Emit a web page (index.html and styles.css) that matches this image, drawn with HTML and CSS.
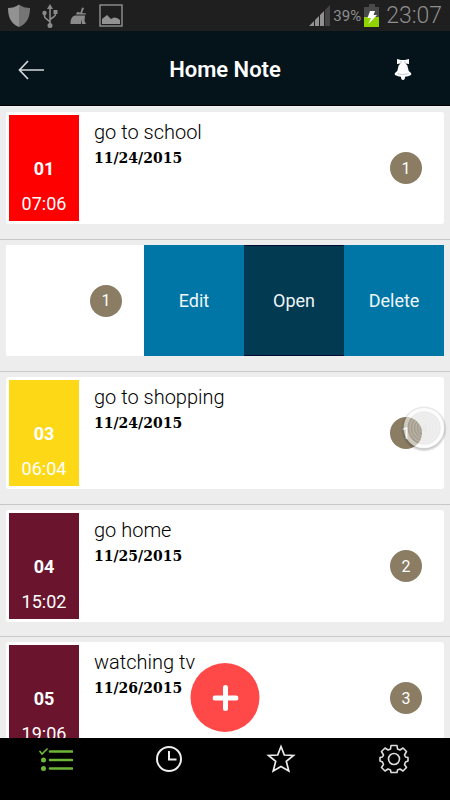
FILE: index.html
```html
<!DOCTYPE html>
<html lang="en">
<head>
<meta charset="utf-8">
<meta name="viewport" content="width=device-width, initial-scale=1">
<title>Home Note</title>
<link rel="stylesheet" href="styles.css">
</head>
<body>
<div class="app">
  <div class="status">
    <div class="status-group">
      <svg width="22" height="24" viewBox="0 0 22 24"><path d="M11 .5C8 3 4 4 0 4c0 9 3 16 11 19z" fill="#929292"/><path d="M11 .5C14 3 18 4 22 4c0 9-3 16-11 19z" fill="#757575"/></svg>
      <svg width="16" height="24" viewBox="0 0 16 24"><g fill="none" stroke="#8a8a8a" stroke-width="1.6"><path d="M8 3v18M2.500 9v3q0 2 2 3l3.500 3M13.500 8v2q0 2-2 3L8 15.500"/></g><g fill="#8a8a8a"><path d="M8 0l3 5H5z"/><circle cx="8" cy="21.500" r="2.500"/><circle cx="2.500" cy="9" r="2.200"/><path d="M11.500 6h4v4h-4z"/></g></svg>
      <svg width="17" height="18" viewBox="0 0 17 18"><path d="M12 .5L14 1l-2 5 4 .5v1H6l1-2.500 3.500.5zM5 8.500h10L14.500 14l1.500 3H12l-.5-5-.5 5H.5Q0 10 5 8.500z" fill="#8a8a8a"/></svg>
      <svg width="24" height="24" viewBox="0 0 24 24"><path d="M1 1h22v21H1z" fill="none" stroke="#8a8a8a" stroke-width="1.500"/><path d="M3 20v-5l5-4 4 4 3-1.500L18 14l3 2v4z" fill="#929292"/></svg>
    </div>
    <div class="status-group status-right">
      <svg width="21" height="21" viewBox="0 0 21 21"><path d="M16 5l5-5v21h-5z" fill="#444"/><path d="M0 21l5-5v5zM6 15l4-4v10H6zM11 10l4-4v15h-4z" fill="#929292"/></svg>
      <span class="percent">39%</span>
      <svg width="15" height="23" viewBox="0 0 15 23"><path d="M5 0h6v3h4v10H0V3h5z" fill="#4a4a4a"/><path d="M0 13h15v10H0z" fill="#91d300"/><path d="M6 7h5l-1.500 4H13l-8.500 9L7 14H3.500z" fill="#fff"/></svg>
      <time class="clock">23:07</time>
    </div>
  </div>

  <header class="header">
    <button class="icon-button" aria-label="Back"><svg width="26" height="20" viewBox="0 0 26 20"><path d="M26 10H1.500M10 1L1.500 10l8.500 9" fill="none" stroke="#d5d8da" stroke-width="1.700"/></svg></button>
    <h1 class="title">Home Note</h1>
    <button class="icon-button" aria-label="Reminders"><svg width="18" height="22" viewBox="0 0 18 22"><path d="M3 0l4 1h4l4-1v5l-3.500-.5Q14 6 14 9q0 3 2.500 4.500Q18 14.500 17 16q-3 1.500-6 1.800Q11 21 9 21t-2-3.200Q4 17.500 1 16q-1-1.500.5-2.500Q4 12 4 9q0-3 2.500-4.500L3 5z" fill="#fff"/><path d="M3.500 14.700q5.500 1.800 11 0M7 2v2.500M11 2v2.500" fill="none" stroke="#a9b3bb" stroke-width=".7"/></svg></button>
  </header>

  <main class="content">
    <ul class="notes">
      <li class="note">
        <article class="card">
          <div class="tag tag-red"><strong>01</strong><time>07:06</time></div>
          <div class="text"><h2>go to school</h2><p>11/24/2015</p></div>
          <span class="badge">1</span>
        </article>
      </li>
      <li class="note">
        <article class="card card-open">
          <span class="badge">1</span>
          <div class="actions">
            <button class="action">Edit</button>
            <button class="action action-pressed">Open</button>
            <button class="action">Delete</button>
          </div>
        </article>
      </li>
      <li class="note">
        <article class="card">
          <div class="tag tag-yellow"><strong>03</strong><time>06:04</time></div>
          <div class="text"><h2>go to shopping</h2><p>11/24/2015</p></div>
          <span class="badge">1</span>
          <svg class="touch" width="48" height="48" viewBox="0 0 48 48"><defs><radialGradient id="halo"><stop offset=".82" stop-color="#000" stop-opacity=".3"/><stop offset="1" stop-color="#000" stop-opacity="0"/></radialGradient><mask id="ring"><path d="M0 0h48v48H0z" fill="#fff"/><circle cx="24" cy="24" r="20" fill="#000"/></mask></defs><circle cx="24" cy="25" r="23" fill="url(#halo)" mask="url(#ring)"/><circle cx="24" cy="24" r="17" fill="#ccc" fill-opacity=".4"/><circle cx="24" cy="24" r="18.500" fill="none" stroke="#fafafa" stroke-opacity=".6" stroke-width="4"/><g fill="none" stroke="#fff" stroke-opacity=".2" stroke-width="1.500"><circle cx="24" cy="24" r="14"/><circle cx="24" cy="24" r="11"/><circle cx="24" cy="24" r="8"/><circle cx="24" cy="24" r="5"/></g></svg>
        </article>
      </li>
      <li class="note">
        <article class="card">
          <div class="tag tag-wine"><strong>04</strong><time>15:02</time></div>
          <div class="text"><h2>go home</h2><p>11/25/2015</p></div>
          <span class="badge">2</span>
        </article>
      </li>
      <li class="note">
        <article class="card">
          <div class="tag tag-wine"><strong>05</strong><time>19:06</time></div>
          <div class="text"><h2>watching tv</h2><p>11/26/2015</p></div>
          <span class="badge">3</span>
        </article>
      </li>
    </ul>
    <button class="add" aria-label="Add note"><svg width="26" height="26" viewBox="0 0 26 26"><path d="M13 2.500v21M2.500 13h21" stroke="#fff" stroke-width="5" stroke-linecap="round"/></svg></button>
  </main>

  <nav class="tabs">
    <a href="#notes" aria-label="Notes"><svg width="34" height="28" viewBox="0 0 34 28"><g fill="none" stroke="#6fb536" stroke-linecap="round"><path d="M11 6.500h22M11 15h22M11 23.500h22" stroke-width="2.600"/><path d="M1 6.500l2 2.500 5-5" stroke-width="1.700"/></g><circle cx="4.500" cy="15" r="2.500" fill="#6fb536"/><circle cx="4.500" cy="23.500" r="2.500" fill="#6fb536"/></svg></a>
    <a href="#recent" aria-label="Recent"><svg width="28" height="28" viewBox="0 0 28 28"><g fill="none" stroke="#eee" stroke-width="2"><circle cx="14" cy="14" r="12"/><path d="M14 6v8.500h7.500"/></g></svg></a>
    <a href="#favourites" aria-label="Favourites"><svg width="30" height="30" viewBox="0 0 30 30"><path d="M15 2.500l3.300 8.500 9.200.5-7.200 5.800 2.500 9.700-7.800-4.500L7.200 27l2.500-9.700-7.200-5.800 9.200-.5z" fill="none" stroke="#eee" stroke-width="1.700"/></svg></a>
    <a href="#settings" aria-label="Settings"><svg width="30" height="30" viewBox="0 0 30 30"><g fill="none" stroke="#ddd" stroke-width="1.600" stroke-linejoin="round"><path d="M12 1.500h6l.5 3.500 2.500 1 3-2 3.500 3.500-2 3.500 1 2 2.500.5v3.500L26.500 18l-1 2.500 2 3L24 27l-3-2-2.500 1-.5 2.500h-6L11.500 26 9 25l-3 2-3.500-3.500 2-3-1-2.500L1 17v-3.500l2.500-.5 1-2-2-3.500L6 4l3 2 2.500-1z"/><circle cx="15" cy="15" r="5.500"/></g></svg></a>
  </nav>
</div>
</body>
</html>
```

FILE: styles.css
```css
* { box-sizing: border-box; }

body {
  margin: 0;
  background: #000;
  font-family: Roboto, "Liberation Sans", sans-serif;
}

h1, h2, p, ul { margin: 0; padding: 0; }

ul { list-style: none; }

button {
  padding: 0;
  border: 0;
  font: inherit;
  color: inherit;
  background: none;
}

svg { display: block; flex: none; }

.app {
  display: flex;
  flex-direction: column;
  height: 100vh;
}

/* Status bar */
.status {
  display: flex;
  justify-content: space-between;
  align-items: center;
  height: 31px;
  padding: 0 8px;
  background: #1f1f1f;
  color: #8e8e8e;
}

.status-group {
  display: flex;
  align-items: center;
  gap: 12px;
}

.status-right { gap: 3px; }

.percent { font-size: 15px; }

.clock {
  margin-left: 4px;
  font-size: 23px;
  font-weight: 300;
}

/* Header */
.header {
  display: flex;
  justify-content: space-between;
  align-items: center;
  height: 75px;
  padding: 3px 16px 0;
  border-bottom: 1px solid #000;
  background: #05131b;
  color: #fff;
}

.icon-button {
  display: flex;
  justify-content: center;
  width: 30px;
}

.header .icon-button:last-child { margin-right: 16px; }

.title {
  margin-left: 16px;
  font-size: 22px;
  line-height: 28px;
  font-weight: 600;
}

/* Notes */
.content {
  position: relative;
  flex: 1;
  min-height: 0;
  overflow: hidden;
  background: #ededed;
}

.note {
  padding: 5px 6px 15px;
  border-top: 1px solid #c8c8c8;
}

.note:nth-child(even) { padding-bottom: 14px; }

.note:first-child { border-top-color: #f4f4f4; }

.card {
  position: relative;
  display: flex;
  align-items: center;
  height: 112px;
  padding: 3px;
  border-radius: 3px;
  background: #fff;
}

.tag {
  display: flex;
  flex-direction: column;
  justify-content: flex-end;
  align-items: center;
  gap: 15px;
  width: 70px;
  height: 106px;
  padding-bottom: 7px;
  color: #fff;
  font-size: 18px;
  line-height: 20px;
}

.tag-red { background: #fe0000; }
.tag-yellow { background: #fdd816; }
.tag-wine { background: #6b142d; }

.text {
  flex: 1;
  align-self: flex-start;
  padding: 5px 0 0 15px;
  color: #000;
}

.text h2 {
  font-size: 20px;
  line-height: 24px;
  font-weight: 300;
}

.text p {
  font: bold 14px/28px "DejaVu Serif", serif;
}

.badge {
  display: flex;
  justify-content: center;
  align-items: center;
  width: 32px;
  height: 32px;
  margin-right: 19px;
  border-radius: 50%;
  background: #8a7d64;
  color: #fff;
  font-size: 16px;
}

.card-open {
  justify-content: flex-end;
  height: 111px;
  margin-bottom: 1px;
  padding: 0;
  border-radius: 0;
}

.card-open .badge { margin-right: 22px; }

.actions {
  display: flex;
  height: 100%;
}

.action {
  width: 100px;
  background: #0076a6;
  color: #f0f5f8;
  font-size: 18px;
}

.action-pressed {
  border: solid #000b35;
  border-width: 1px 0;
  background: #023a52;
}

.touch {
  position: absolute;
  top: 27px;
  right: -4px;
}

.add {
  position: absolute;
  bottom: 6px;
  left: 50%;
  display: flex;
  justify-content: center;
  align-items: center;
  width: 69px;
  height: 69px;
  border-radius: 50%;
  background: #ff4949;
  transform: translateX(-50%);
}

/* Bottom tabs */
.tabs {
  display: grid;
  grid-template-columns: repeat(4, 1fr);
  height: 62px;
  padding-bottom: 20px;
  background: #000;
}

.tabs a {
  display: flex;
  justify-content: center;
  align-items: center;
}
```
